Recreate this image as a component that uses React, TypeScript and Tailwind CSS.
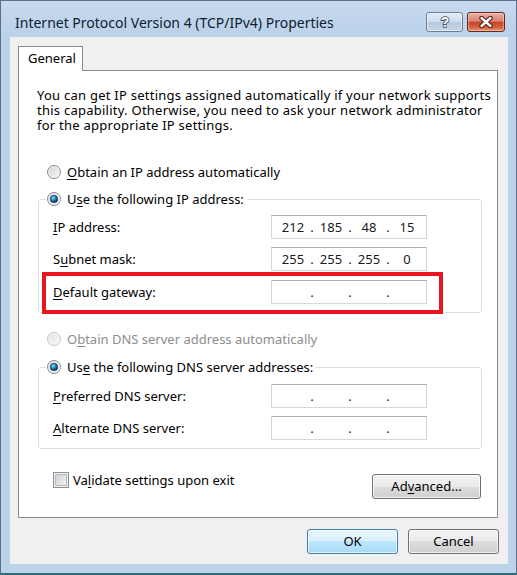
import React from 'react';

function Radio({ checked = false, disabled = false }: { checked?: boolean; disabled?: boolean }) {
    return (
        <svg width="14" height="14" viewBox="0 0 14 14" className="shrink-0">
            <defs>
                <linearGradient id="radioFace" x1="0" y1="0" x2="1" y2="1">
                    <stop offset="0" stopColor="#cfcfcf" />
                    <stop offset="1" stopColor="#fbfbfb" />
                </linearGradient>
                <linearGradient id="radioFaceOff" x1="0" y1="0" x2="1" y2="1">
                    <stop offset="0" stopColor="#e2e2e2" />
                    <stop offset="1" stopColor="#fbfbfb" />
                </linearGradient>
                <radialGradient id="radioDot" cx="0.4" cy="0.35" r="0.65">
                    <stop offset="0" stopColor="#8fdcff" />
                    <stop offset="0.45" stopColor="#2a86c2" />
                    <stop offset="1" stopColor="#0b2a44" />
                </radialGradient>
            </defs>
            <circle cx="7" cy="7" r="6.5" fill={disabled ? 'url(#radioFaceOff)' : 'url(#radioFace)'} stroke={disabled ? '#c5c5c5' : '#8a8c8e'} />
            <circle cx="7" cy="7" r="5.2" fill="none" stroke="#ffffff" strokeOpacity="0.55" />
            {checked && <circle cx="7" cy="7" r="3.8" fill="url(#radioDot)" stroke="#1c3a52" strokeWidth="0.6" />}
        </svg>
    );
}

function Checkbox() {
    return (
        <svg width="16" height="16" viewBox="0 0 16 16" className="shrink-0">
            <defs>
                <linearGradient id="cbFace" x1="0" y1="0" x2="1" y2="1">
                    <stop offset="0" stopColor="#c9cdd3" />
                    <stop offset="1" stopColor="#f5f6f7" />
                </linearGradient>
            </defs>
            <rect x="0.5" y="0.5" width="15" height="15" fill="#f4f4f4" stroke="#8e8f8f" />
            <rect x="2.5" y="2.5" width="11" height="11" fill="url(#cbFace)" stroke="#b4b8be" />
        </svg>
    );
}

function IpField({ parts }: { parts: string[] }) {
    return (
        <div className="w-[156px] h-[24px] shrink-0 bg-white border border-[#d3d8df] border-t-[#abadb3] flex items-center pl-[6px] text-[#1a1a1a]">
            {parts.map((p, i) => (
                <React.Fragment key={i}>
                    {i > 0 && <span className="w-[8px] text-center">.</span>}
                    <span className="w-[30px] text-center">{p}</span>
                </React.Fragment>
            ))}
        </div>
    );
}

const btn =
    'h-[25px] rounded-[3px] border flex items-center justify-center shadow-[inset_0_0_0_1px_rgba(255,255,255,0.7)]';

export default function App() {
    return (
        <div className="w-[517px] h-[575px] flex flex-col bg-[#bdd3ea] border-x border-t border-[#5d7087] border-b-2 border-b-[#2f6c78] font-['Noto_Sans',sans-serif] text-[13px] leading-[15px] text-black">
            {/* Title bar */}
            <div className="h-[36px] shrink-0 flex items-center pt-[6px] pl-[14px] pr-[11px] bg-[linear-gradient(to_bottom,#c7daee,#bad1e9)]">
                <span className="flex-1 whitespace-nowrap text-[14px] text-[#10202f]">Internet Protocol Version 4 (TCP/IPv4) Properties</span>
                <div className="flex gap-[4px]">
                    <div className="w-[37px] h-[20px] rounded-[3px] border border-[#6d7e94] bg-[linear-gradient(to_bottom,#e3ecf6_0%,#cfdcec_48%,#b5c8de_52%,#c9d8ea_100%)] flex items-center justify-center shadow-[inset_0_0_0_1px_rgba(255,255,255,0.5)]">
                        <svg width="12" height="16" viewBox="0 0 12 16">
                            <text x="6" y="13" textAnchor="middle" fontFamily="Liberation Sans, sans-serif" fontWeight="bold" fontSize="14" fill="#ffffff" stroke="#3d4d61" strokeWidth="1.6" paintOrder="stroke">?</text>
                        </svg>
                    </div>
                    <div className="w-[38px] h-[20px] rounded-[3px] border border-[#6e2418] bg-[linear-gradient(to_bottom,#e9b0a4_0%,#d8836f_45%,#c4452a_52%,#d6633f_80%,#e39a80_100%)] flex items-center justify-center shadow-[inset_0_0_0_1px_rgba(255,255,255,0.35)]">
                        <svg width="16" height="12" viewBox="0 0 16 12">
                            <path d="M3.5 2 L12.5 10 M12.5 2 L3.5 10" stroke="#4b1a12" strokeWidth="4.4" strokeLinecap="round" fill="none" />
                            <path d="M3.5 2 L12.5 10 M12.5 2 L3.5 10" stroke="#ffffff" strokeWidth="2.4" strokeLinecap="round" fill="none" />
                        </svg>
                    </div>
                </div>
            </div>

            {/* Client area */}
            <div className="flex-1 ml-[9px] mr-[8px] mb-[9px] bg-[#f0f0f0] flex flex-col">
                <div className="mt-[9px] ml-[8px] flex">
                    <div className="relative z-10 -mb-px w-[65px] h-[25px] bg-white border-x border-t border-[#898c95] pl-[9px] pt-[4px]">
                        General
                    </div>
                </div>

                <div className="h-[448px] ml-[8px] mr-[10px] bg-white border border-[#898c95] flex flex-col">
                    <p className="mt-[17px] ml-[18px] whitespace-nowrap tracking-[0.25px]">
                        You can get IP settings assigned automatically if your network supports
                        <br />
                        this capability. Otherwise, you need to ask your network administrator
                        <br />
                        for the appropriate IP settings.
                    </p>

                    <div className="mt-[31px] ml-[28px] h-[16px] flex items-center gap-[6px]">
                        <Radio />
                        <span><u className="underline-offset-2">O</u>btain an IP address automatically</span>
                    </div>

                    <fieldset className="mt-[11px] ml-[19px] w-[444px] border border-[#d5dfe5] rounded-[3px] pb-[8px]">
                        <legend className="ml-[7px] pl-[1px] pr-[3px] h-[16px] flex items-center gap-[6px]">
                            <Radio checked />
                            <span>U<u className="underline-offset-2">s</u>e the following IP address:</span>
                        </legend>
                        <div className="mt-[8px] ml-[14px] h-[24px] flex items-center">
                            <span className="w-[218px]"><u className="underline-offset-2">I</u>P address:</span>
                            <IpField parts={['212', '185', '48', '15']} />
                        </div>
                        <div className="mt-[8px] ml-[14px] h-[24px] flex items-center">
                            <span className="w-[218px]">S<u className="underline-offset-2">u</u>bnet mask:</span>
                            <IpField parts={['255', '255', '255', '0']} />
                        </div>
                        <div className="relative mt-[9px] ml-[14px] h-[24px] flex items-center">
                            <span className="w-[218px]"><u className="underline-offset-2">D</u>efault gateway:</span>
                            <IpField parts={['', '', '', '']} />
                            <div className="absolute left-[-11px] top-[-8px] w-[401px] h-[42px] border-4 border-[#e5161e]" />
                        </div>
                    </fieldset>

                    <div className="mt-[18px] ml-[28px] h-[16px] flex items-center gap-[6px] text-[#8d8d8d]">
                        <Radio disabled />
                        <span>O<u className="underline-offset-2">b</u>tain DNS server address automatically</span>
                    </div>

                    <fieldset className="mt-[12px] ml-[19px] w-[444px] border border-[#d5dfe5] rounded-[3px] pb-[8px]">
                        <legend className="ml-[7px] pl-[1px] pr-[3px] h-[16px] flex items-center gap-[6px]">
                            <Radio checked />
                            <span>Us<u className="underline-offset-2">e</u> the following DNS server addresses:</span>
                        </legend>
                        <div className="mt-[9px] ml-[14px] h-[24px] flex items-center">
                            <span className="w-[218px]"><u className="underline-offset-2">P</u>referred DNS server:</span>
                            <IpField parts={['', '', '', '']} />
                        </div>
                        <div className="mt-[8px] ml-[14px] h-[24px] flex items-center">
                            <span className="w-[218px]"><u className="underline-offset-2">A</u>lternate DNS server:</span>
                            <IpField parts={['', '', '', '']} />
                        </div>
                    </fieldset>

                    <div className="mt-[23px] flex items-start">
                        <div className="ml-[34px] h-[16px] flex items-center gap-[4px]">
                            <Checkbox />
                            <span>Va<u className="underline-offset-2">l</u>idate settings upon exit</span>
                        </div>
                        <div className="flex-1" />
                        <div className={`${btn} mt-[2px] mr-[16px] w-[109px] border-[#707070] bg-[linear-gradient(to_bottom,#f2f2f2_0%,#ebebeb_50%,#dddddd_50%,#cfcfcf_100%)]`}>
                            Ad<u className="underline-offset-2">v</u>anced...
                        </div>
                    </div>
                </div>

                <div className="mt-[11px] mr-[9px] flex justify-end gap-[10px]">
                    <div className={`${btn} w-[91px] border-[#3c7fb1] bg-[linear-gradient(to_bottom,#eaf6fd_0%,#d9f0fc_50%,#bee6fd_50%,#a7d9f5_100%)]`}>
                        OK
                    </div>
                    <div className={`${btn} w-[91px] border-[#707070] bg-[linear-gradient(to_bottom,#f2f2f2_0%,#ebebeb_50%,#dddddd_50%,#cfcfcf_100%)]`}>
                        Cancel
                    </div>
                </div>
            </div>
        </div>
    );
}
